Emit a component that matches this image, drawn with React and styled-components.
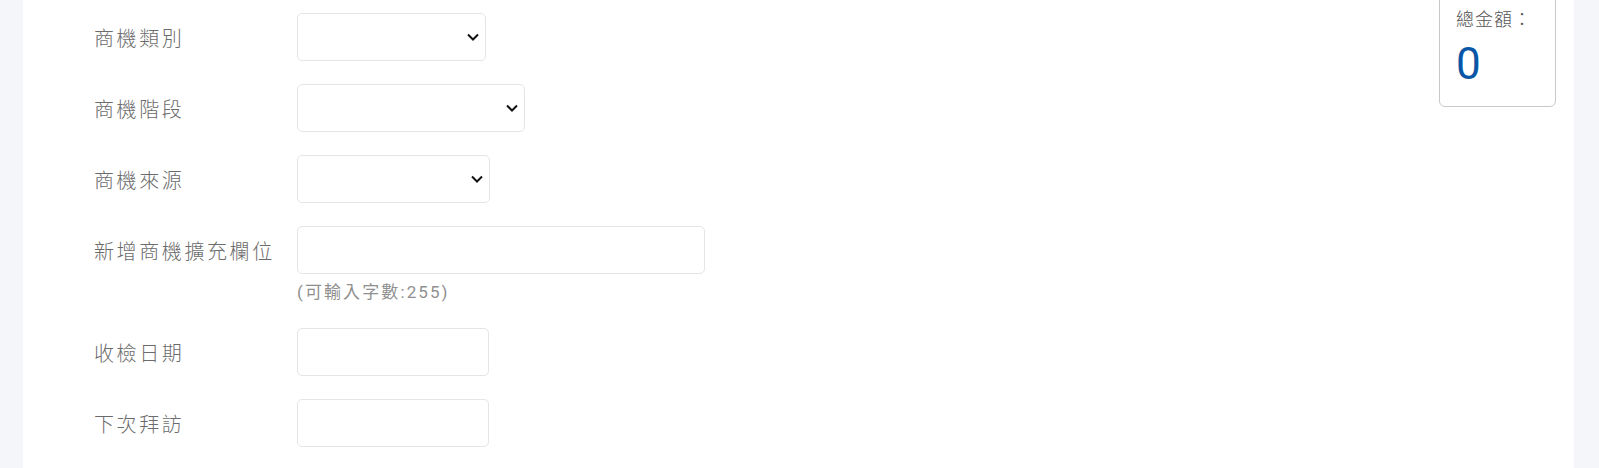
import React from 'react';
import styled, { createGlobalStyle } from 'styled-components';

const GlobalStyle = createGlobalStyle`
    html, body {
        margin: 0;
        padding: 0;
        background: #f5f6fa;
        font-family: Roboto, "Noto Sans CJK TC", sans-serif;
    }
`;

const Page = styled.div`
    height: 468px;
    overflow: hidden;
    padding: 0 25px 0 23px;
`;

const Panel = styled.div`
    position: relative;
    background: #ffffff;
    height: 100%;
    padding: 13px 0 0 71px;
    box-sizing: border-box;
`;

const Form = styled.div`
    display: flex;
    flex-direction: column;
    gap: 23px;
`;

const Row = styled.div`
    display: grid;
    grid-template-columns: 203px auto;
    align-items: start;
`;

const Label = styled.label`
    height: 48px;
    display: flex;
    align-items: center;
    font-family: "Noto Sans CJK TC", sans-serif;
    font-weight: 300;
    font-size: 20px;
    letter-spacing: 2.6px;
    color: #6b6b6b;
    white-space: nowrap;
`;

const Field = styled.div`
    display: flex;
    flex-direction: column;
`;

const SelectWrap = styled.div`
    position: relative;
    width: ${p => p.$width}px;
`;

const Select = styled.select`
    appearance: none;
    width: 100%;
    height: 48px;
    border: 1px solid #e5e5e5;
    border-radius: 5px;
    background: #fff;
    box-sizing: border-box;
    padding: 0 30px 0 12px;
    font-size: 16px;
    outline: none;
`;

const Chevron = styled.svg`
    position: absolute;
    right: 7px;
    top: 20px;
    pointer-events: none;
`;

const Input = styled.input`
    width: ${p => p.$width}px;
    height: 48px;
    border: 1px solid #e5e5e5;
    border-radius: 5px;
    background: #fff;
    box-sizing: border-box;
    padding: 0 12px;
    font-size: 16px;
    outline: none;
`;

const Hint = styled.div`
    margin-top: 6px;
    line-height: 25px;
    font-size: 17px;
    letter-spacing: 2.1px;
    color: #8f8f8f;
    font-family: Roboto, "Noto Sans CJK TC", sans-serif;
`;

const TotalBox = styled.div`
    position: absolute;
    top: -12px;
    right: 18px;
    width: 117px;
    height: 119px;
    box-sizing: border-box;
    border: 1px solid #c9c9c9;
    border-radius: 6px;
    background: #fff;
    padding: 16px 0 0 16px;
`;

const TotalLabel = styled.div`
    font-family: "Noto Sans CJK TC", sans-serif;
    font-weight: 300;
    font-size: 18px;
    line-height: 26px;
    color: #555555;
    letter-spacing: 1px;
`;

const TotalValue = styled.div`
    margin-top: 8px;
    font-family: Roboto, sans-serif;
    font-size: 44px;
    line-height: 50px;
    color: #0a56a6;
`;

const SelectField = ({ width }) => (
    <SelectWrap $width={width}>
        <Select defaultValue="">
            <option value=""></option>
        </Select>
        <Chevron width="12" height="8" viewBox="0 0 12 8">
            <path d="M1 1.5 L6 6.5 L11 1.5" fill="none" stroke="#111" strokeWidth="2" />
        </Chevron>
    </SelectWrap>
);

const App = () => {
    return (
        <Page>
            <GlobalStyle />
            <Panel>
                <Form>
                    <Row>
                        <Label>商機類別</Label>
                        <SelectField width={189} />
                    </Row>
                    <Row>
                        <Label>商機階段</Label>
                        <SelectField width={228} />
                    </Row>
                    <Row>
                        <Label>商機來源</Label>
                        <SelectField width={193} />
                    </Row>
                    <Row>
                        <Label>新增商機擴充欄位</Label>
                        <Field>
                            <Input $width={408} />
                            <Hint>(可輸入字數:255)</Hint>
                        </Field>
                    </Row>
                    <Row>
                        <Label>收檢日期</Label>
                        <Input $width={192} />
                    </Row>
                    <Row>
                        <Label>下次拜訪</Label>
                        <Input $width={192} />
                    </Row>
                </Form>
                <TotalBox>
                    <TotalLabel>總金額：</TotalLabel>
                    <TotalValue>0</TotalValue>
                </TotalBox>
            </Panel>
        </Page>
    );
};

export default App;
